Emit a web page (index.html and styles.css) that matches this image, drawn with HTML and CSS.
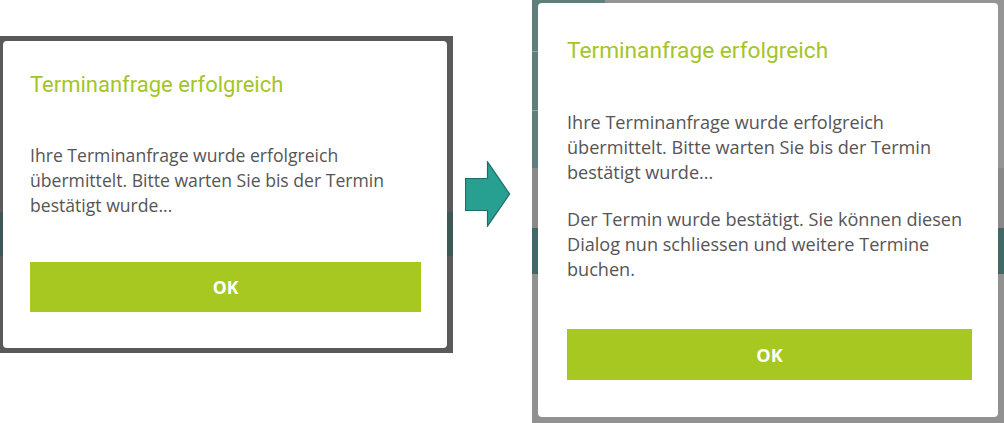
FILE: index.html
```html
<!DOCTYPE html>
<html lang="de">
<head>
<meta charset="utf-8">
<title>Terminanfrage erfolgreich</title>
<link rel="stylesheet" href="styles.css">
</head>
<body>
<div class="stage">
  <div class="frame frame-left">
    <div class="dialog dialog-left">
      <h2 class="title">Terminanfrage erfolgreich</h2>
      <p class="text">Ihre Terminanfrage wurde erfolgreich übermittelt. Bitte warten Sie bis der Termin bestätigt wurde...</p>
      <button class="ok">OK</button>
    </div>
  </div>
  <svg class="arrow" width="46" height="66" viewBox="0 0 46 66" aria-hidden="true">
    <path d="M0.5 17.5 H22.5 V0.8 L44.6 33 L22.5 65.2 V49.5 H0.5 Z" fill="#27a091" stroke="#1c6f66" stroke-width="1.2"/>
  </svg>
  <div class="frame frame-right">
    <div class="dialog dialog-right">
      <h2 class="title">Terminanfrage erfolgreich</h2>
      <p class="text">Ihre Terminanfrage wurde erfolgreich übermittelt. Bitte warten Sie bis der Termin bestätigt wurde...</p>
      <p class="text text-second">Der Termin wurde bestätigt. Sie können diesen Dialog nun schliessen und weitere Termine buchen.</p>
      <button class="ok">OK</button>
    </div>
  </div>
</div>
</body>
</html>
```
FILE: styles.css
```css
html, body {
  margin: 0;
  padding: 0;
  background: #ffffff;
}

.stage {
  display: flex;
  align-items: flex-start;
  width: 1004px;
  height: 423px;
}

.frame {
  box-sizing: border-box;
  display: flex;
  flex-shrink: 0;
}

.frame-left {
  width: 453px;
  height: 317px;
  margin-top: 36px;
  padding: 5px 6px 5px 3px;
  background:
    linear-gradient(to bottom,
      #5a5a5a 0, #5a5a5a 176px,
      #3c5755 176px, #3c5755 220px,
      #5a5a5a 220px);
}

.frame-right {
  width: 472px;
  height: 423px;
  margin-left: auto;
  padding: 3px 6px 6px 6px;
  background:
    linear-gradient(to bottom,
      #5f7f7d 0, #5f7f7d 51px,
      #8ea5a3 51px, #8ea5a3 52px,
      #5f7f7d 52px, #5f7f7d 110px,
      #8ea5a3 110px, #8ea5a3 111px,
      #5f7f7d 111px, #5f7f7d 168px,
      transparent 168px) left top / 73px 100% no-repeat,
    linear-gradient(to bottom,
      #959595 0, #959595 168px,
      #898989 168px, #898989 228px,
      #416866 228px, #416866 274px,
      #919191 274px);
}

.arrow {
  display: block;
  margin-top: 161px;
  margin-left: 12px;
  flex-shrink: 0;
}

.dialog {
  box-sizing: border-box;
  flex: 1;
  background: #ffffff;
  border-radius: 4px;
  display: flex;
  flex-direction: column;
  align-items: stretch;
}

.title {
  margin: 0;
  font-family: Roboto, "Liberation Sans", sans-serif;
  font-weight: 400;
  color: #a4c528;
}

.text {
  margin: 0;
  font-family: "Open Sans", "Liberation Sans", sans-serif;
  color: #555555;
  line-height: 25px;
}

.ok {
  border: none;
  margin: 0;
  padding: 0;
  background: #a7c721;
  color: #ffffff;
  font-family: "Open Sans", "Liberation Sans", sans-serif;
  font-weight: 700;
  cursor: pointer;
}

.dialog-left {
  padding: 31px 26px 35px 27px;
}

.dialog-left .title {
  font-size: 22px;
  line-height: 26px;
}

.dialog-left .text {
  font-size: 17.6px;
  margin-top: 45px;
}

.dialog-left .ok {
  height: 50px;
  margin-top: 44px;
  font-size: 17.6px;
}

.dialog-right {
  padding: 34px 26px 37px 29px;
}

.dialog-right .title {
  font-size: 22.7px;
  line-height: 27px;
}

.dialog-right .text {
  font-size: 18.1px;
  margin-top: 46px;
}

.dialog-right .text-second {
  margin-top: 22px;
}

.dialog-right .ok {
  height: 51px;
  margin-top: 47px;
  font-size: 18.1px;
}
```
